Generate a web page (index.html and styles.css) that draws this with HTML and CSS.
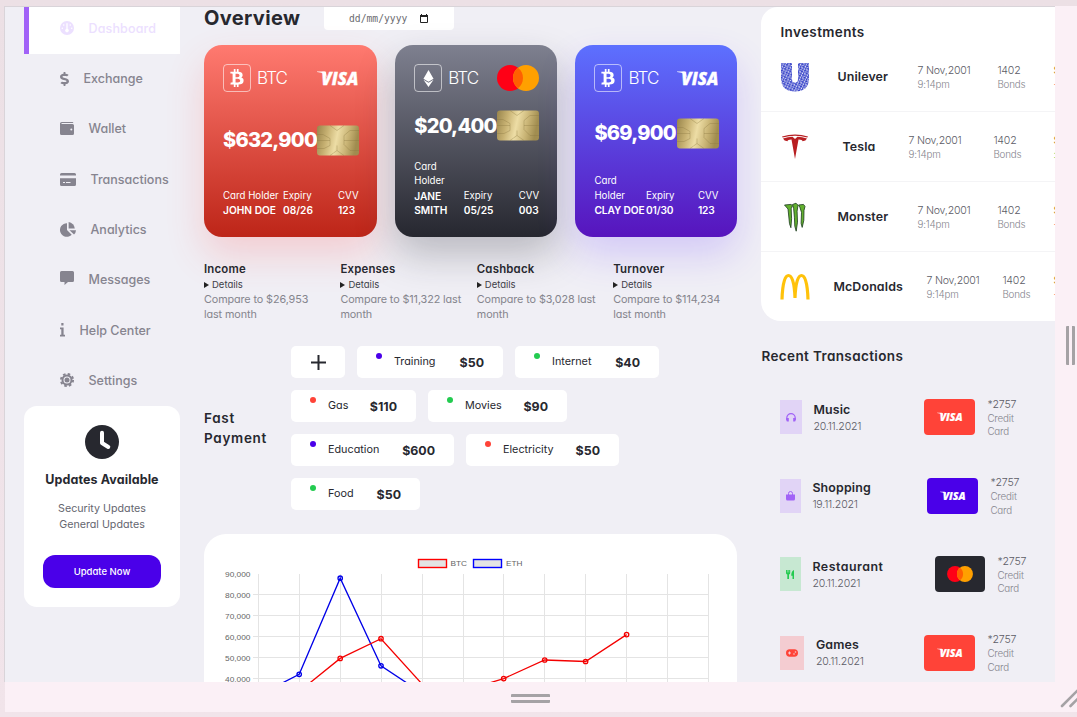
FILE: index.html
```html
<!DOCTYPE html>
<html lang="en">
<head>
<meta charset="utf-8">
<title>Overview</title>
<link rel="stylesheet" href="styles.css">
</head>
<body>
<svg class="defs" width="0" height="0" aria-hidden="true">
  <defs>
    <linearGradient id="gold" x1="0" x2="1" y1="0" y2="0.15">
      <stop offset="0" stop-color="#98844b"/><stop offset=".28" stop-color="#c8b273"/><stop offset=".52" stop-color="#eddda5"/><stop offset=".78" stop-color="#c9b475"/><stop offset="1" stop-color="#a18d50"/>
    </linearGradient>
    <pattern id="speckle" width="5.3" height="4.7" patternUnits="userSpaceOnUse" patternTransform="rotate(24)">
      <rect width="6" height="5" fill="#3440c8"/>
      <path d="M0 1q1.500-1 2 .7M3.200.4l1.200 1.400M.4 3.800l1.600-1.100M3 2.800q1.800.2 1.200 1.700" stroke="#fff" stroke-width=".9" fill="none"/>
    </pattern>
    <symbol id="btc" viewBox="0 0 384 512"><path d="M310.204 242.638c27.73-14.18 45.377-39.39 41.28-81.3-5.358-57.351-52.458-76.573-114.85-81.929V0h-48.528v77.203c-12.605 0-25.525.315-38.444.63V0h-48.528v79.409c-17.842.539-38.622.276-97.37 0v51.678c38.314-.678 58.417-3.14 63.023 21.427v217.429c-2.925 19.492-18.524 16.685-53.255 16.071L3.765 443.68c88.481 0 97.37.315 97.37.315V512h48.528v-67.06c13.234.315 26.154.315 38.444.315V512h48.528v-68.005c81.299-4.412 135.647-24.894 142.895-101.467 5.671-61.446-23.32-88.862-69.326-99.89zM150.608 134.553c27.415 0 113.126-8.507 113.126 48.528 0 54.515-85.71 48.212-113.126 48.212v-96.74zm0 251.776V279.821c32.772 0 133.127-9.138 133.127 53.255-.001 60.186-100.355 53.253-133.127 53.253z"/></symbol>
    <symbol id="eth" viewBox="0 0 320 512"><path d="M311.9 260.8L160 353.6 8 260.8 160 0l151.9 260.8zM160 383.4L8 290.6 160 512l152-221.4-152 92.8z"/></symbol>
    <symbol id="visa" viewBox="0 0 42 15">
      <path d="M0 .6h7.200q1.500 0 1.800 1.400l.8 4.500L7.200 3Q5 1.300 0 1z"/>
      <text x="4.300" y="14.300" textLength="37" lengthAdjust="spacingAndGlyphs">VISA</text>
    </symbol>
    <symbol id="mastercard" viewBox="0 0 42 26"><circle cx="13" cy="13" r="13" fill="#ff0016"/><circle cx="29" cy="13" r="13" fill="#ffa000"/><path d="M21 2.750a13 13 0 0 1 0 20.500 13 13 0 0 1 0-20.500z" fill="#ff6000"/></symbol>
    <symbol id="chip" viewBox="0 0 42 30"><rect width="42" height="30" rx="3" fill="url(#gold)"/><path d="M0 9h6l7 4v7l-6 3H0M0 15h13M42 5H33l-6 5v9l6 6h9M42 15H27M13 0l7 5 7-5M13 30l7-5 7 5M20 25v-5" fill="none" stroke="#8c7843" stroke-width=".7" opacity=".5"/></symbol>
  </defs>
</svg>

<div class="device">
  <div class="screen">
    <aside class="sidebar">
      <nav class="menu">
        <a class="item active"><svg width="14" height="14" viewBox="0 0 14 14"><circle cx="7" cy="7" r="7" fill="currentColor"/><path d="M7 2.200v6" stroke="#fff" stroke-width="1.300"/><circle cx="7" cy="9.600" r="1.800" fill="#fff"/><g fill="#fff"><circle cx="3.700" cy="4" r=".8"/><circle cx="10.300" cy="4" r=".8"/><circle cx="2.300" cy="7.300" r=".8"/><circle cx="11.700" cy="7.300" r=".8"/></g></svg><span>Dashboard</span></a>
        <a class="item"><svg width="9" height="14" viewBox="0 0 288 512" preserveAspectRatio="none"><path fill="currentColor" d="M209.200 233.400l-108-31.600C88.700 198.200 80 186.500 80 173.500c0-16.300 13.200-29.500 29.500-29.500h66.300c12.200 0 24.200 3.700 34.200 10.500 6.100 4.100 14.300 3.100 19.500-2l34.800-34c7.100-6.900 6.100-18.400-1.800-24.500C238 74.800 207.400 64.100 176 64V16c0-8.800-7.200-16-16-16h-32c-8.800 0-16 7.200-16 16v48h-2.500C45.800 64-5.400 118.700.5 183.600c4.200 46.100 39.400 83.600 83.800 96.600l102.500 30c12.500 3.700 21.200 15.300 21.200 28.300 0 16.300-13.200 29.500-29.500 29.500h-66.300C100 368 88 364.300 78 357.500c-6.100-4.100-14.300-3.100-19.500 2l-34.800 34c-7.100 6.900-6.100 18.400 1.800 24.500 24.500 19.200 55.100 29.900 86.500 30v48c0 8.800 7.200 16 16 16h32c8.800 0 16-7.200 16-16v-48.200c46.600-.9 90.300-28.600 105.700-72.700 21.500-61.600-14.600-124.800-72.500-141.700z"/></svg><span>Exchange</span></a>
        <a class="item"><svg width="14" height="13" viewBox="0 0 14 13"><path fill="currentColor" d="M1.800 0H12.500q.8 0 .8 1H2q-.6 0-.6.500T2 2h10.500Q14 2 14 3.500v8Q14 13 12.500 13h-11Q0 13 0 11.500v-10Q0 0 1.800 0z"/><circle cx="11.300" cy="7.600" r="1" fill="#f0eff5"/></svg><span>Wallet</span></a>
        <a class="item"><svg width="16" height="13" viewBox="0 0 16 13"><path fill="currentColor" d="M1.500 0h13Q16 0 16 1.500V2.500H0V1.500Q0 0 1.500 0zM0 5.300h16v6.200q0 1.500-1.500 1.500h-13Q0 13 0 11.500z"/><path d="M3 9.500h2M6 9.500h4.500" stroke="#f0eff5"/></svg><span>Transactions</span></a>
        <a class="item"><svg width="16" height="15" viewBox="0 0 16 15"><g fill="currentColor"><path d="M7 1.200V8l4.700 4.700A6.800 6.800 0 1 1 7 1.200z"/><path d="M8.600 0a7 7 0 0 1 6.200 6.600H8.600z"/><path d="M9.500 8.200H16a7 7 0 0 1-2 4.400z"/></g></svg><span>Analytics</span></a>
        <a class="item"><svg class="lift" width="14" height="14" viewBox="0 0 14 14"><path fill="currentColor" d="M1.500 0h11Q14 0 14 1.500v8q0 1.500-1.500 1.500H8l-3.500 3v-3h-3Q0 11 0 9.500v-8Q0 0 1.500 0z"/></svg><span>Messages</span></a>
        <a class="item"><svg width="5" height="14" viewBox="0 0 5 14"><path fill="currentColor" d="M1.300 0h2.200v2.400H1.300zM0 4.600h3.600v7.200H5V13.500H0v-1.700h1.300V6.300H0z"/></svg><span>Help Center</span></a>
        <a class="item"><svg width="14" height="14" viewBox="0 0 14 14"><g fill="none" stroke="currentColor"><circle cx="7" cy="7" r="4.500" stroke-width="2"/><circle cx="7" cy="7" r="6.100" stroke-width="1.900" stroke-dasharray="2.550 2.240"/></g><circle cx="7" cy="7" r="2.500" fill="currentColor"/></svg><span>Settings</span></a>
      </nav>
      <section class="updates">
        <svg width="34" height="34" viewBox="0 0 34 34"><circle cx="17" cy="17" r="17" fill="#27282f"/><path d="M17 7.800V18l6.300 4" fill="none" stroke="#fff" stroke-width="4" stroke-linecap="round" stroke-linejoin="round"/></svg>
        <h4>Updates Available</h4>
        <p>Security Updates<br>General Updates</p>
        <button>Update Now</button>
      </section>
    </aside>

    <main class="main">
      <header class="head">
        <h1>Overview</h1>
        <div class="date"><span>dd/mm/yyyy</span><svg width="8" height="9" viewBox="0 0 8 9"><path d="M.5 1.500h7v7h-7z" fill="none" stroke="#222"/><path d="M0 1h8v2H0zM1 0h1v1H1zM6 0h1v1H6z" fill="#222"/></svg></div>
      </header>

      <div class="cards">
        <article class="card red">
          <div class="card-top"><i class="coin"><svg width="14" height="18"><use href="#btc"/></svg></i><b>BTC</b><svg class="brand" width="42" height="15"><use href="#visa"/></svg></div>
          <div class="card-mid"><strong>$632,900</strong><svg width="42" height="31"><use href="#chip"/></svg></div>
          <div class="card-bottom"><div><small>Card Holder</small><em>JOHN DOE</em></div><div><small>Expiry</small><em>08/26</em></div><div><small>CVV</small><em>123</em></div></div>
        </article>
        <article class="card dark">
          <div class="card-top"><i class="coin"><svg width="11" height="17"><use href="#eth"/></svg></i><b>BTC</b><svg class="brand" width="42" height="26"><use href="#mastercard"/></svg></div>
          <div class="card-mid"><strong>$20,400</strong><svg width="42" height="31"><use href="#chip"/></svg></div>
          <div class="card-bottom"><div><small>Card<br>Holder</small><em>JANE<br>SMITH</em></div><div><small>Expiry</small><em>05/25</em></div><div><small>CVV</small><em>003</em></div></div>
        </article>
        <article class="card violet">
          <div class="card-top"><i class="coin"><svg width="14" height="18"><use href="#btc"/></svg></i><b>BTC</b><svg class="brand" width="42" height="15"><use href="#visa"/></svg></div>
          <div class="card-mid"><strong>$69,900</strong><svg width="42" height="31"><use href="#chip"/></svg></div>
          <div class="card-bottom"><div><small>Card<br>Holder</small><em>CLAY DOE</em></div><div><small>Expiry</small><em>01/30</em></div><div><small>CVV</small><em>123</em></div></div>
        </article>
      </div>

      <div class="stats">
        <div><h5>Income</h5><span class="details">Details</span><p>Compare to $26,953<br>last month</p></div>
        <div><h5>Expenses</h5><span class="details">Details</span><p>Compare to $11,322 last<br>month</p></div>
        <div><h5>Cashback</h5><span class="details">Details</span><p>Compare to $3,028 last<br>month</p></div>
        <div><h5>Turnover</h5><span class="details">Details</span><p>Compare to $114,234<br>last month</p></div>
      </div>

      <section class="fast">
        <h2>Fast<br>Payment</h2>
        <div class="badges">
          <div class="badge add"><svg width="15" height="15" viewBox="0 0 15 15"><path d="M7.500 0v15M0 7.500h15" stroke="#27282f" stroke-width="2"/></svg></div>
          <div class="badge training"><i class="dot blue"></i><span>Training</span><b>$50</b></div>
          <div class="badge internet"><i class="dot green"></i><span>Internet</span><b>$40</b></div>
          <div class="badge gas"><i class="dot coral"></i><span>Gas</span><b>$110</b></div>
          <div class="badge movies"><i class="dot green"></i><span>Movies</span><b>$90</b></div>
          <div class="badge education"><i class="dot blue"></i><span>Education</span><b>$600</b></div>
          <div class="badge electricity"><i class="dot coral"></i><span>Electricity</span><b>$50</b></div>
          <div class="badge food"><i class="dot green"></i><span>Food</span><b>$50</b></div>
        </div>
      </section>

      <section class="chart">
        <svg width="533" height="170" viewBox="204 534 533 170">
          <path d="M258.500 574v130M299.500 574v130M340.500 574v130M381.500 574v130M422.500 574v130M463.500 574v130M503.500 574v130M544.500 574v130M585.500 574v130M626.500 574v130M667.500 574v130M708.500 574v130M253 594.500h456M253 615.500h456M253 636.500h456M253 657.500h456M253 678.500h456" stroke="#e4e4e4" fill="none"/>
          <rect x="418.500" y="559.500" width="28" height="8" fill="#e3e3e3" stroke="red" stroke-width="1.400"/>
          <rect x="473.500" y="559.500" width="28" height="8" fill="#e3e3e3" stroke="#00f" stroke-width="1.400"/>
          <g class="axis">
            <text x="450.500" y="566" textLength="16.500" lengthAdjust="spacingAndGlyphs">BTC</text><text x="506" y="566" textLength="16.500" lengthAdjust="spacingAndGlyphs">ETH</text>
            <text x="225" y="576.500" textLength="25.500" lengthAdjust="spacingAndGlyphs">90,000</text><text x="225" y="597.500" textLength="25.500" lengthAdjust="spacingAndGlyphs">80,000</text><text x="225" y="618.500" textLength="25.500" lengthAdjust="spacingAndGlyphs">70,000</text><text x="225" y="639.500" textLength="25.500" lengthAdjust="spacingAndGlyphs">60,000</text><text x="225" y="660.500" textLength="25.500" lengthAdjust="spacingAndGlyphs">50,000</text><text x="225" y="681.500" textLength="25.500" lengthAdjust="spacingAndGlyphs">40,000</text>
          </g>
          <g fill="none" stroke-width="1.300">
            <g stroke="#0000e8"><path d="M258 695.500L299.200 674.300 340.200 578.200 381 665.800 422 693"/><circle cx="299.200" cy="674.300" r="2.200"/><circle cx="340.200" cy="578.200" r="2.200"/><circle cx="381" cy="665.800" r="2.200"/></g>
            <g stroke="#f40000"><path d="M299.200 691.500L340.200 658.400 381 638.700 422 684 463 691 503.700 678.600 544.700 660 585.600 661.500 626.600 634.600"/><circle cx="340.200" cy="658.400" r="2.200"/><circle cx="381" cy="638.700" r="2.200"/><circle cx="503.700" cy="678.600" r="2.200"/><circle cx="544.700" cy="660" r="2.200"/><circle cx="585.600" cy="661.500" r="2.200"/><circle cx="626.600" cy="634.600" r="2.200"/></g>
          </g>
        </svg>
      </section>
    </main>

    <aside class="right">
      <section class="investments">
        <h2>Investments</h2>
        <div class="row unilever"><svg width="30" height="30" viewBox="0 0 30 30"><path d="M1 1h11v16q0 3.500 3 3.500t3-3.500V1h11v15q0 13.500-14 13.500T1 16z" fill="url(#speckle)"/></svg><h4>Unilever</h4><div><p>7 Nov,2001</p><small>9:14pm</small></div><div><p>1402</p><small>Bonds</small></div><div class="gain down"><p>$20,033</p><small>-4.27%</small></div></div>
        <div class="row tesla"><svg width="30" height="30" viewBox="0 0 30 30"><path d="M2 4.500Q15 .5 28 4.500l-.6 1Q15 2 2.600 5.500zM3 6.500Q8 5 12.500 4.800L15 7l2.500-2.200Q22 5 27 6.500 26 9 22.500 9.200q0-1.500-4-1.700L15 27 11.500 7.500q-4 .2-4 1.700Q4 9 3 6.500z" fill="#b81f22"/></svg><h4>Tesla</h4><div><p>7 Nov,2001</p><small>9:14pm</small></div><div><p>1402</p><small>Bonds</small></div><div class="gain"><p>$20,033</p><small>:4.27%</small></div></div>
        <div class="row monster"><svg width="30" height="30" viewBox="0 0 30 30"><g fill="#63b02f" stroke="#1b3a1e" stroke-width=".8"><path d="M4.500 3l6.500-.6 1.500 1.300-1.300 3 .4 10-.7 9-1.400-4L8 7z"/><path d="M12.500 2.500l3.500-1.300 2 2-.9 6 .4 11-1.300 9-1.400-5-.4-9-.8-9z"/><path d="M18.500 3l5-.6 1.500 2-1 4-.2 10-1.600 7-1.100-4 .4-11-1.600-5z"/></g></svg><h4>Monster</h4><div><p>7 Nov,2001</p><small>9:14pm</small></div><div><p>1402</p><small>Bonds</small></div><div class="gain down"><p>$20,033</p><small>-4.27%</small></div></div>
        <div class="row mcdonalds"><svg width="30" height="30" viewBox="0 0 30 30"><path d="M2 27.500C2.500 11 5 3.500 8.500 3.500S14.500 11 15 26M15 26C15.500 11 18 3.500 21.500 3.500S27.500 11 28 27.500" fill="none" stroke="#ffc20a" stroke-width="3.200"/></svg><h4>McDonalds</h4><div><p>7 Nov,2001</p><small>9:14pm</small></div><div><p>1402</p><small>Bonds</small></div><div class="gain down"><p>$20,033</p><small>-4.27%</small></div></div>
      </section>

      <section class="recent">
        <h2>Recent Transactions</h2>
        <div class="tx music"><i class="tile"><svg width="10" height="9" viewBox="0 0 10 9"><path d="M.8 7V4.800a4.200 4.200 0 0 1 8.400 0V7" fill="none" stroke="currentColor" stroke-width="1.200"/><path d="M.3 5h2.500v3.500H1.500Q.3 8.500.3 7zM9.700 5H7.200v3.500h1.300q1.200 0 1.200-1.500z" fill="currentColor"/></svg></i><div class="who"><h4>Music</h4><p>20.11.2021</p></div><i class="pay"><svg width="26" height="10"><use href="#visa"/></svg></i><div class="acct"><p>*2757</p><small>Credit<br>Card</small></div></div>
        <div class="tx shopping"><i class="tile"><svg width="9" height="10" viewBox="0 0 9 10"><path d="M0 3.500h9V8q0 1.500-1.500 1.500h-6Q0 9.500 0 8z" fill="currentColor"/><path d="M2.500 5V2.500a2 2 0 0 1 4 0V5" fill="none" stroke="currentColor"/></svg></i><div class="who"><h4>Shopping</h4><p>19.11.2021</p></div><i class="pay"><svg width="26" height="10"><use href="#visa"/></svg></i><div class="acct"><p>*2757</p><small>Credit<br>Card</small></div></div>
        <div class="tx restaurant"><i class="tile"><svg width="9" height="9" viewBox="0 0 9 9"><path d="M0 0h4.200v3q0 1.200-1.200 1.600V9H1.300V4.600Q0 4.200 0 3zM8 0v9H6.500V5.800H5.200Q5.200 1 8 0z" fill="currentColor"/><path d="M1.400 0v2.500M2.800 0v2.500" stroke="#c7e8d2" stroke-width=".5"/></svg></i><div class="who"><h4>Restaurant</h4><p>20.11.2021</p></div><i class="pay"><svg width="26" height="16"><use href="#mastercard"/></svg></i><div class="acct"><p>*2757</p><small>Credit<br>Card</small></div></div>
        <div class="tx games"><i class="tile"><svg width="12" height="8" viewBox="0 0 12 8"><rect y=".3" width="12" height="7.400" rx="3.700" fill="currentColor"/><path d="M2 4h3M3.500 2.500v3" stroke="#f4ccd1"/><circle cx="8" cy="5" r=".8" fill="#f4ccd1"/><circle cx="9.500" cy="3" r=".8" fill="#f4ccd1"/></svg></i><div class="who"><h4>Games</h4><p>20.11.2021</p></div><i class="pay"><svg width="26" height="10"><use href="#visa"/></svg></i><div class="acct"><p>*2757</p><small>Credit<br>Card</small></div></div>
      </section>
    </aside>
  </div>
  <div class="handle side"></div>
  <div class="handle bottom"></div>
  <svg class="corner" width="17" height="20" viewBox="0 0 17 20"><path d="M2 18L20 0M10.500 18l9-9" stroke="#a5a2a5" stroke-width="2.600" stroke-linecap="round"/></svg>
</div>
</body>
</html>
```
FILE: styles.css
```css
* { box-sizing: border-box; margin: 0; }
body {
  width: 1077px; height: 717px; overflow: hidden;
  padding: 6px 0 5px 4px;
  background: linear-gradient(#ece0e5, #f1e4ea);
  font-family: Inter, "Open Sans", sans-serif;
  font-feature-settings: "cv11";
  color: #27282f; white-space: nowrap;
}
i, em { font-style: normal; }
small, em, svg { display: block; }
svg { flex: none; }
.defs { position: absolute; }
.device {
  height: 706px; padding-bottom: 30px;
  display: grid; grid-template-columns: 1051px 1fr; grid-template-rows: 676px 30px;
  background: linear-gradient(90deg, transparent 1px, #fbf0f6 1px);
}
.screen {
  display: flex; gap: 24px; overflow: hidden;
  padding-left: 19px;
  border: solid #d9d4d9; border-width: 1px 0 0 1px;
  background: #f0eff5;
}
.device .handle { align-self: center; justify-self: center; }
.handle.side { width: 9px; height: 39px; border: solid #a5a2a5; border-width: 0 3px; border-radius: 1px; margin-left: 9px; margin-top: 3px; }
.handle.bottom { width: 39px; height: 9px; border: solid #a5a2a5; border-width: 3px 0; border-radius: 1px; margin-left: 2px; margin-top: 3px; }
.corner { justify-self: end; margin-top: 6px; }

/* Sidebar */
.sidebar { width: 156px; flex: none; }
.menu { display: flex; flex-direction: column; }
.item {
  height: 50.3px; padding-left: 36px;
  display: flex; align-items: center; gap: 15px;
  color: #86848f; font-size: 12.5px; font-weight: 500; letter-spacing: 0;
}
.item span { margin-left: -.5px; }
.item.active {
  height: 46.500px; padding: 0 0 4px 31px;
  border-left: 5px solid #a162f7; background: #fff; color: #ece0ff; letter-spacing: .15px;
}
.lift { margin-top: -3px; }
.updates {
  height: 201px; margin-top: .4px; padding-top: 19px;
  display: flex; flex-direction: column; align-items: center;
  border-radius: 13px; background: #fff; text-align: center;
}
.updates h4 { margin-top: 12px; font-size: 12.5px; line-height: 18px; font-weight: 700; letter-spacing: .1px; }
.updates p { margin-top: 12px; font-size: 10.700px; line-height: 16px; color: #65666f; }
.updates button {
  width: 118px; height: 33px; margin-top: 22px;
  border: 0; border-radius: 12px; background: #4a00e9; color: #fff;
  font: 500 9.500px Inter, sans-serif; font-feature-settings: "cv11";
}

/* Main column */
.main { width: 533px; flex: none; }
.head { display: flex; height: 38px; gap: 24px; }
h1 { width: 96px; font-size: 20px; line-height: 22px; font-weight: 700; letter-spacing: .35px; }
.date {
  width: 130px; height: 23px; padding-left: 25px;
  display: flex; align-items: center; gap: 13px;
  border-radius: 0 0 4px 4px; background: #fff;
  color: #6b6b6f; font: 9.700px "DejaVu Sans Mono", monospace;
}
.cards { display: flex; gap: 18.200px; height: 192px; }
.card {
  flex: none; width: 162px; padding: 19px 18.500px 19.500px 19px;
  display: flex; flex-direction: column; justify-content: space-between;
  border-radius: 18px; color: #fff;
}
.red { width: 173px; background: linear-gradient(#ff7a70, #bd2518); box-shadow: 0 18px 38px #ff474733; }
.dark { background: linear-gradient(#7e808f, #26272f); box-shadow: 0 18px 38px #26272f44; }
.violet { background: linear-gradient(#5d70ff, #5714bd); box-shadow: 0 18px 38px #5d30ff33; }
.card-top { display: flex; align-items: center; height: 28px; }
.coin {
  width: 28px; height: 28px; display: grid; place-items: center;
  border: 1px solid #ffffff90; border-radius: 4px;
}
.card svg, .pay svg { fill: #fff; }
.card-top b { margin-left: 6px; font-size: 17px; font-weight: 300; letter-spacing: -.9px; }
.brand { margin-left: auto; }
#visa text { font: italic 800 18px "Open Sans", sans-serif; stroke: #fff; stroke-width: .35px; }
.card-mid { display: flex; align-items: center; justify-content: space-between; height: 31px; }
.card-mid strong { width: 92px; font-size: 20px; font-weight: 800; letter-spacing: -.75px; }
.card:not(.red) .card-mid strong { width: 81px; }
.card-bottom {
  display: grid; align-items: end; grid-template-columns: 60px 55px auto;
  font-size: 9.700px; line-height: 14.500px;
}
.card-bottom small { font-size: 9.700px; }
.card-bottom em { font-size: 10.200px; font-weight: 600; }
.dark .card-bottom { grid-template-columns: 49.500px 55px auto; }
.violet .card-bottom { grid-template-columns: 51.500px 52px auto; }
.violet em { letter-spacing: -.1px; }

.stats { display: grid; grid-template-columns: repeat(4, 136.400px); margin-top: 24px; height: 85px; }
.stats h5 { font-size: 11.400px; line-height: 16px; font-weight: 600; letter-spacing: .2px; }
.details { display: flex; align-items: center; gap: 3px; font-size: 9.500px; line-height: 15px; color: #3e3e48; }
.details::before { content: ""; border: solid transparent; border-width: 3px 0 3px 5px; border-left-color: #222; }
.stats p { font-size: 10.800px; line-height: 15px; color: #85858d; letter-spacing: -.1px; }

h2 { font-size: 13.500px; line-height: 20px; font-weight: 600; letter-spacing: .38px; }
.fast { display: grid; grid-template-columns: 87px 380px; align-items: center; }
.fast h2 { letter-spacing: .7px; }
.badges { display: flex; flex-wrap: wrap; gap: 12px; }
.badge {
  height: 32px; padding: 0 19px;
  display: flex; align-items: center;
  border-radius: 5px; background: #fff; font-size: 10.800px;
}
.badge b { margin-left: auto; font-size: 12.400px; font-weight: 700; }
.badge span { margin: -2px 0 0 12px; }
.dot { width: 6px; height: 6px; border-radius: 50%; margin-bottom: 13px; }
.blue { background: #4a00e9; } .green { background: #23cb50; } .coral { background: #ff4338; }
.badge.add { width: 54px; padding: 0; justify-content: center; }
.training { width: 146px; } .internet { width: 144px; }
.gas { width: 125px; } .movies { width: 139px; }
.education { width: 163px; } .electricity { width: 153px; }
.food { width: 129px; }
.chart { height: 190px; margin-top: 24px; border-radius: 22px; background: #fff; }
.axis text { font: 8px "Liberation Sans", sans-serif; fill: #666; }

/* Right column */
.right { width: 350px; flex: none; padding-left: .4px; }
.investments { height: 314px; padding-top: 15px; border-radius: 17px 0 0 20px; background: #fff; }
.investments h2 { margin-left: 19px; }
.row {
  height: 70px; padding-left: 19px;
  display: grid; align-items: center; border-bottom: 1px solid #f4f4f6;
}
.row:last-child { border: 0; }
.unilever, .monster { grid-template-columns: 57px 80px 80px 56px 1fr; }
.tesla { grid-template-columns: 62px 66px 85px 60px 1fr; }
.mcdonalds { grid-template-columns: 53px 93px 76px 51px 1fr; }
.right h4 { font-size: 12.400px; line-height: 18px; font-weight: 600; letter-spacing: .15px; }
.right p { font-size: 10.600px; line-height: 15px; color: #5c5c66; font-weight: 300; letter-spacing: -.2px; }
.right small { font-size: 9.800px; line-height: 13.500px; color: #85858d; font-weight: 300; letter-spacing: -.15px; }
.row > div { padding-top: 1px; }
.right .gain p { font-weight: 500; color: #b98a3c; }
.right .gain small { color: #23cb50; }
.right .down small { color: #ff4338; }
.recent h2 { margin-top: 25px; margin-bottom: 12px; }
.tx { height: 78.500px; padding-left: 19px; display: grid; align-items: center; }
.tile { height: 34px; display: grid; place-items: center; }
.pay { width: 50.500px; height: 36px; border-radius: 4px; display: grid; place-items: center; background: #ff4338; }
.acct { padding-top: 1px; }
.music { grid-template-columns: 21.500px 11.500px 111px 63px 1fr; }
.shopping { grid-template-columns: 20.500px 11.500px 115px 63px 1fr; }
.restaurant { grid-template-columns: 20.500px 11.500px 122.500px 62.500px 1fr; }
.games { grid-template-columns: 23.500px 12px 108.500px 63px 1fr; }
.tile { grid-column: 1; } .who { grid-column: 3; } .pay { grid-column: 4; } .acct { grid-column: 5; }
.restaurant h4 { letter-spacing: .5px; }
.music .tile, .shopping .tile { background: #e1d4f6; color: #a162f7; }
.restaurant .tile { background: #c7e8d2; color: #23cb50; }
.games .tile { background: #f4ccd1; color: #ff4338; }
.shopping .pay { background: #4a00e9; }
.restaurant .pay { background: #27282f; }
```
